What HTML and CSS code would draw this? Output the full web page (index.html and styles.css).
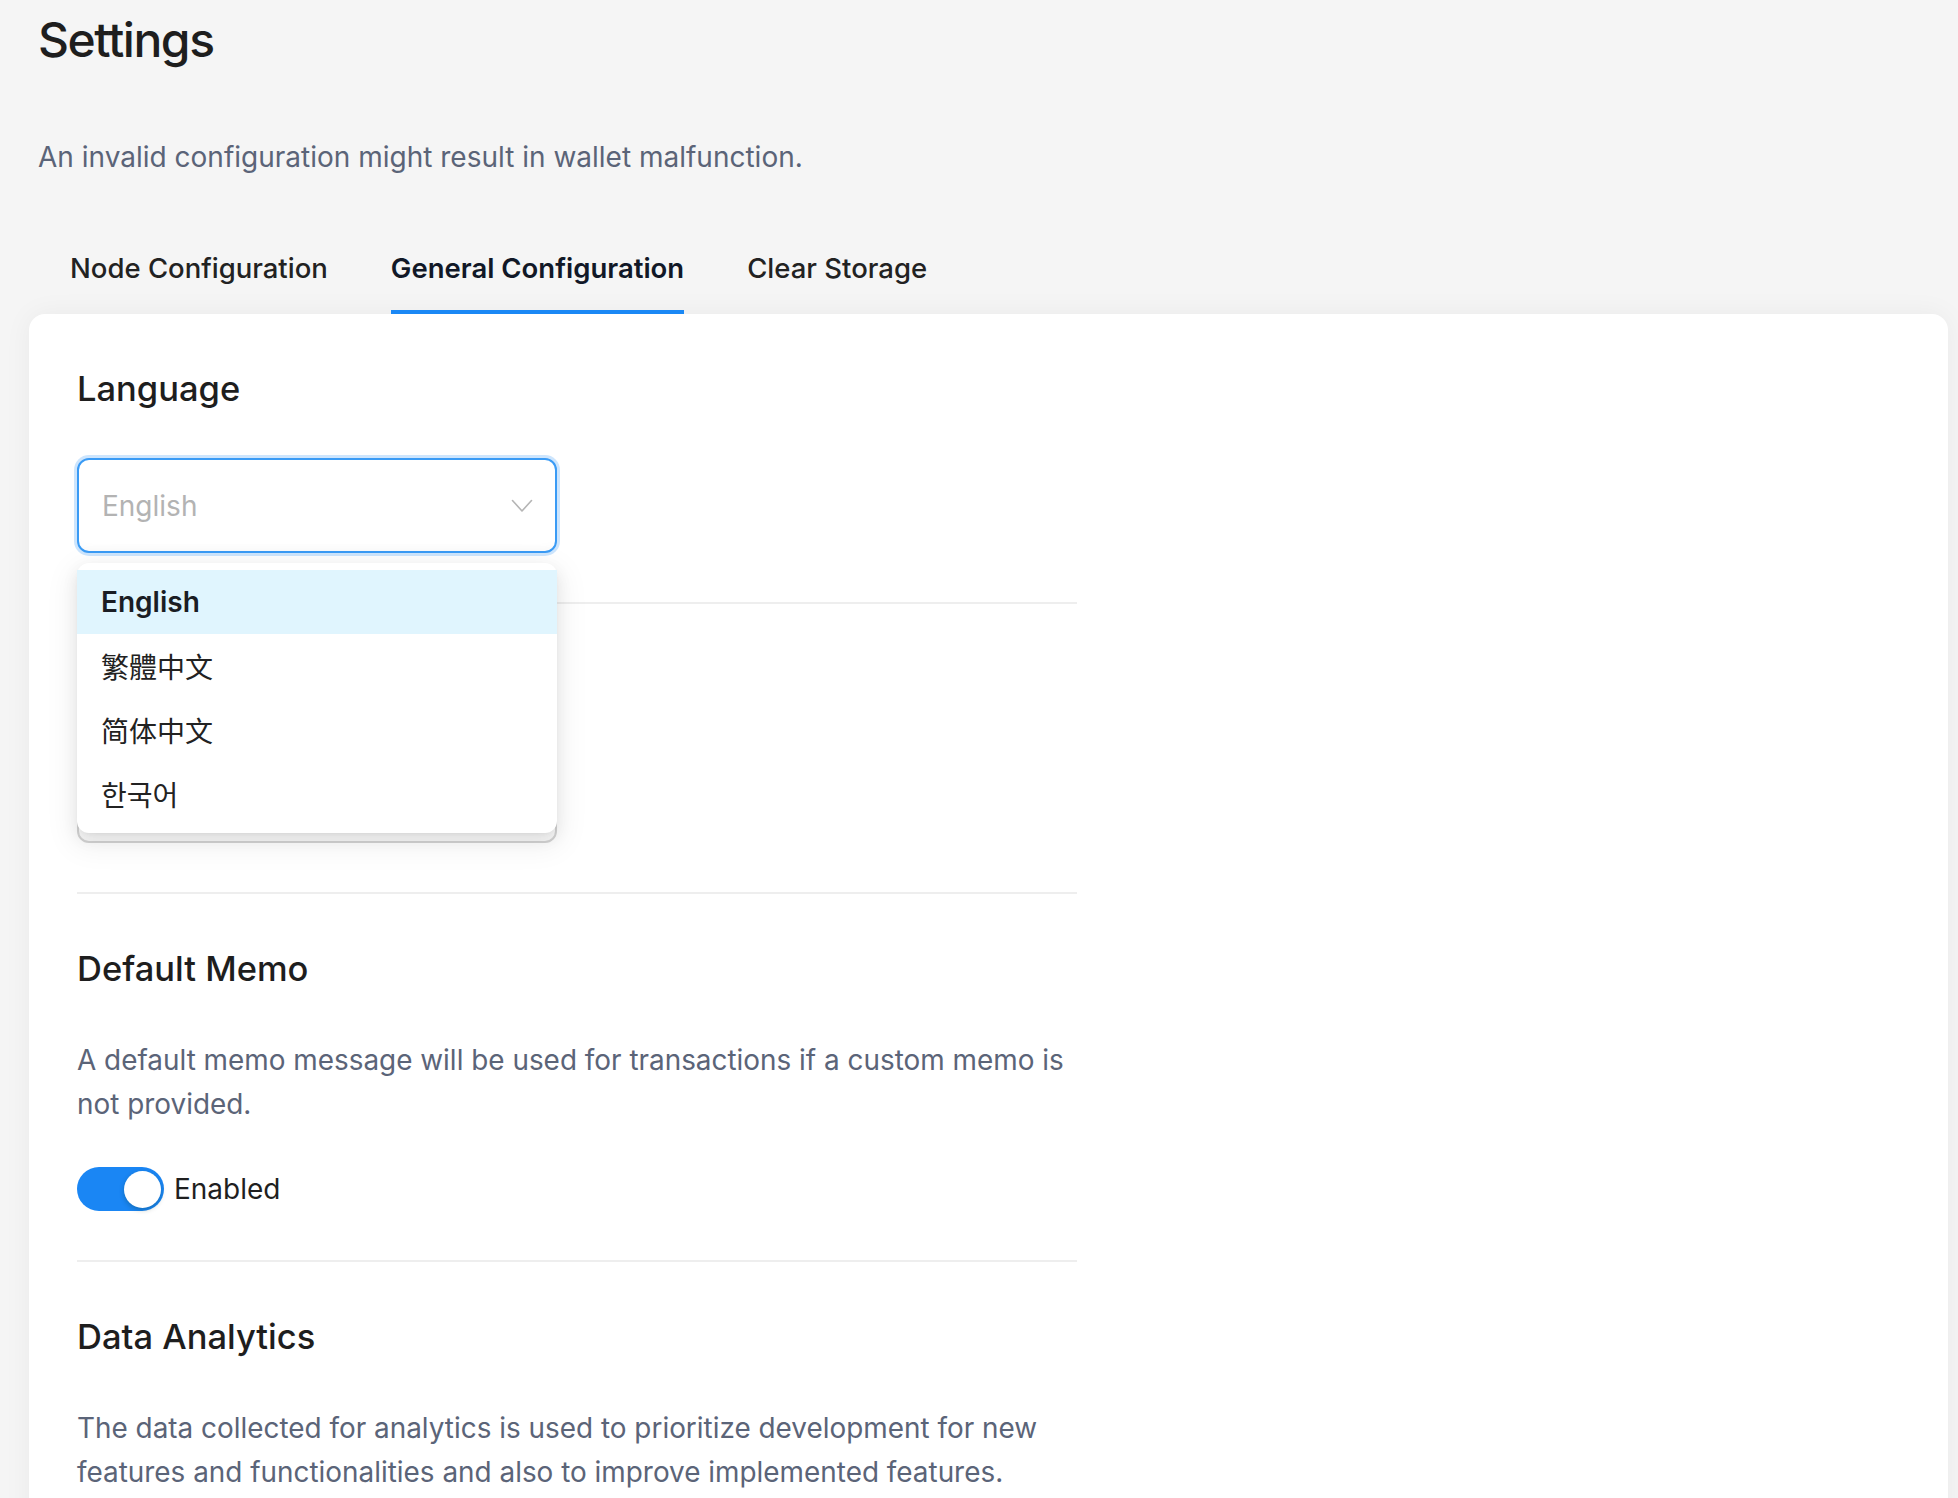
FILE: index.html
```html
<!DOCTYPE html>
<html lang="en">
<head>
<meta charset="utf-8">
<title>Settings</title>
<link rel="stylesheet" href="styles.css">
</head>
<body>
<div class="page">
  <header class="header">
    <h1 class="title">Settings</h1>
    <p class="subtitle">An invalid configuration might result in wallet malfunction.</p>
    <nav class="tabs">
      <a class="tab">Node Configuration</a>
      <a class="tab tab-active">General Configuration</a>
      <a class="tab">Clear Storage</a>
    </nav>
  </header>

  <main class="card">
    <section class="section">
      <h2 class="section-title">Language</h2>
      <div class="select-wrap">
        <div class="select select-focused">
          <span class="select-value">English</span>
          <svg class="chevron" width="22" height="14" viewBox="0 0 22 14"><polyline points="1.5,1.5 11,12 20.5,1.5" fill="none" stroke="#b5b5b5" stroke-width="1.6" stroke-linecap="round" stroke-linejoin="round"/></svg>
        </div>
        <ul class="menu">
          <li class="menu-item menu-item-active">English</li>
          <li class="menu-item" lang="zh-Hant">繁體中文</li>
          <li class="menu-item" lang="zh-Hans">简体中文</li>
          <li class="menu-item" lang="ko">한국어</li>
        </ul>
      </div>
    </section>

    <section class="section">
      <div class="section-title-space"></div>
      <div class="select">
        <span class="select-value"></span>
        <svg class="chevron" width="22" height="14" viewBox="0 0 22 14"><polyline points="1.5,1.5 11,12 20.5,1.5" fill="none" stroke="#b5b5b5" stroke-width="1.6" stroke-linecap="round" stroke-linejoin="round"/></svg>
      </div>
    </section>

    <section class="section">
      <h2 class="section-title">Default Memo</h2>
      <p class="section-desc">A default memo message will be used for transactions if a custom memo is not provided.</p>
      <label class="switch-row">
        <span class="switch switch-on"><span class="switch-knob"></span></span>
        <span class="switch-label">Enabled</span>
      </label>
    </section>

    <section class="section">
      <h2 class="section-title">Data Analytics</h2>
      <p class="section-desc">The data collected for analytics is used to prioritize development for new features and functionalities and also to improve implemented features.</p>
      <label class="switch-row">
        <span class="switch switch-on"><span class="switch-knob"></span></span>
        <span class="switch-label">Enabled</span>
      </label>
    </section>
  </main>
</div>
</body>
</html>
```

FILE: styles.css
```css
* { box-sizing: border-box; }

html, body {
  margin: 0;
  background: #f5f5f5;
}

body {
  font-family: Inter, "Noto Sans", sans-serif;
  color: #1f1f1f;
  -webkit-font-smoothing: antialiased;
}

.page {
  padding: 0 10px 0 29px;
}

.header {
  padding-left: 9px;
}

.title {
  margin: 0;
  padding-top: 11px;
  font-size: 48px;
  line-height: 58px;
  font-weight: 500;
  letter-spacing: -0.03em;
  color: #1e1e1e;
}

.subtitle {
  margin: 70px 0 0;
  font-size: 28px;
  line-height: 36px;
  color: #5b6478;
}

.tabs {
  display: flex;
  gap: 63px;
  margin-top: 75px;
  padding-left: 32px;
}

.tab {
  font-size: 27.5px;
  line-height: 36px;
  padding-bottom: 24px;
  border-bottom: 4px solid transparent;
  color: #222222;
  font-weight: 500;
  cursor: pointer;
}

.tab-active {
  font-weight: 600;
  color: #111827;
  border-bottom-color: #1a88f5;
}

.card {
  background: #ffffff;
  border-radius: 16px 16px 0 0;
  padding: 0 48px 80px;
  box-shadow: 0 0 28px rgba(0, 0, 0, 0.05);
}

.section {
  max-width: 1000px;
  padding: 54px 0 49px;
  border-bottom: 2px solid #eeeeee;
}

.section:last-child {
  border-bottom: none;
}

.section-title {
  margin: 0 0 48px;
  font-size: 34.5px;
  line-height: 42px;
  font-weight: 500;
  color: #1e1e1e;
}

.section-title-space {
  height: 42px;
  margin-bottom: 48px;
}

.section-desc {
  margin: 0;
  font-size: 27.9px;
  line-height: 44px;
  color: #5b6478;
}

.select-wrap {
  position: relative;
  width: 480px;
}

.select {
  width: 480px;
  height: 95px;
  border: 2px solid #d4d4d4;
  border-radius: 12px;
  background: #ffffff;
  display: flex;
  align-items: center;
  justify-content: space-between;
  padding: 0 22px 0 23px;
  box-shadow: inset 0 -10px 12px -10px rgba(0, 0, 0, 0.05);
}

.select-focused {
  border-color: #3a9bf5;
  box-shadow: 0 0 0 3px rgba(26, 136, 245, 0.22), inset 0 -10px 12px -10px rgba(0, 0, 0, 0.04);
}

.select-value {
  font-size: 28px;
  color: #b3b3b3;
}

.menu {
  position: absolute;
  top: calc(100% + 10px);
  left: 0;
  width: 480px;
  margin: 0;
  padding: 7px 0;
  list-style: none;
  background: #ffffff;
  border-radius: 12px;
  box-shadow: 0 6px 16px rgba(0, 0, 0, 0.08), 0 3px 6px -4px rgba(0, 0, 0, 0.12), 0 9px 28px 8px rgba(0, 0, 0, 0.05);
  z-index: 2;
}

.menu-item {
  height: 64px;
  display: flex;
  align-items: center;
  padding: 0 24px;
  font-size: 28px;
  color: #222222;
}

.menu-item-active {
  background: #e0f5fe;
  font-weight: 600;
  color: #1a1d24;
}

.menu-item:lang(zh-Hant) { font-family: Inter, "Noto Sans CJK TC", sans-serif; }
.menu-item:lang(zh-Hans) { font-family: Inter, "Noto Sans CJK SC", sans-serif; }
.menu-item:lang(ko) { font-family: Inter, "Noto Sans CJK KR", sans-serif; }

.switch-row {
  display: flex;
  align-items: center;
  gap: 10px;
  margin-top: 41px;
}

.switch {
  width: 87px;
  height: 44px;
  border-radius: 22px;
  background: #cccccc;
  display: flex;
  align-items: center;
  padding: 0 3px;
}

.switch-on {
  background: #1a86f4;
  justify-content: flex-end;
}

.switch-knob {
  width: 37px;
  height: 37px;
  border-radius: 50%;
  background: #ffffff;
  box-shadow: 0 2px 5px rgba(0, 35, 11, 0.25);
}

.switch-label {
  font-size: 28px;
  color: #1f1f1f;
}
```
